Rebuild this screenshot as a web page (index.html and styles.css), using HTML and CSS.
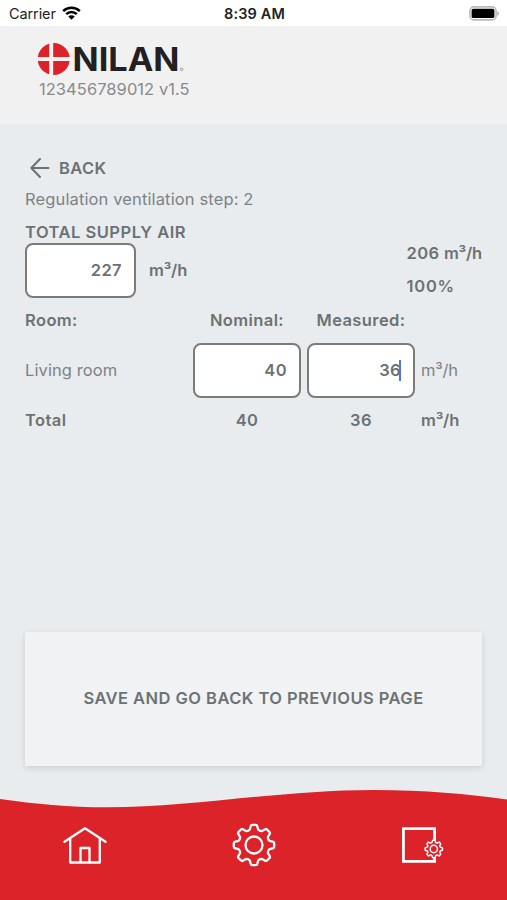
FILE: index.html
```
<!DOCTYPE html>
<html lang="en">
<head>
    <meta charset="UTF-8">
    <meta name="viewport" content="width=device-width, initial-scale=1.0">
    <title>Nilan - Total supply air</title>
    <link rel="stylesheet" href="styles.css">
</head>
<body>
    <div class="status-bar">
        <div class="carrier">
            <span>Carrier</span>
            <svg width="19" height="14" viewBox="0 0 19 14">
                <path d="M1.2 5.2a11.8 11.8 0 0 1 16.6 0M4.2 8.2a7.5 7.5 0 0 1 10.6 0" fill="none" stroke="#000" stroke-width="2.5"/>
                <path d="M9.5 13.8L6.3 10.5a4.6 4.6 0 0 1 6.4 0z"/>
            </svg>
        </div>
        <div class="time">8:39 AM</div>
        <svg class="battery" width="31" height="15" viewBox="0 0 31 15">
            <rect x=".9" y=".9" width="26.2" height="13" rx="4" fill="#fff" stroke="#bababa" stroke-width="1.6"/>
            <rect x="2.6" y="2.8" width="22.8" height="9.2" rx="1.6"/>
            <path d="M28.3 5.2a2.4 2.4 0 0 1 0 4.6z" fill="#aaa"/>
        </svg>
    </div>

    <header class="header">
        <svg class="logo" width="150" height="34" viewBox="0 0 150 34">
            <circle cx="15.7" cy="17" r="16" fill="#dc232a"/>
            <path d="M13.2 0v34M-1 17h34" stroke="#f1f1f1" stroke-width="4"/>
            <text class="logo-text" x="34.5" y="28.7" textLength="107" lengthAdjust="spacingAndGlyphs">NILAN</text>
            <circle cx="143.7" cy="27.3" r="1.3" fill="none" stroke="#888" stroke-width=".8"/>
        </svg>
        <div class="serial">123456789012 v1.5</div>
    </header>

    <main class="content">
        <a class="back">
            <svg width="20" height="20" viewBox="0 0 20 20">
                <path d="M18.5 10H1.3M10 1L1.3 10l8.7 9"/>
            </svg>
            <span>BACK</span>
        </a>
        <div class="step">Regulation ventilation step: 2</div>
        <div class="supply">
            <div>
                <div class="supply-title">TOTAL SUPPLY AIR</div>
                <div class="supply-input">
                    <div class="field">227</div>
                    <span class="m3">m³/h</span>
                </div>
            </div>
            <div class="supply-info">
                <div>206 <span class="m3">m³/h</span></div>
                <div class="percent">100%</div>
            </div>
        </div>

        <div class="rooms">
            <b>Room:</b>
            <b class="center">Nominal:</b>
            <b class="center">Measured:</b>
            <span></span>

            <span class="room-name">Living room</span>
            <div class="field">40</div>
            <div class="field">36<i class="caret"></i></div>
            <span class="unit m3">m³/h</span>

            <b>Total</b>
            <b class="center">40</b>
            <b class="center">36</b>
            <b class="unit m3">m³/h</b>
        </div>

        <div class="save">SAVE AND GO BACK TO PREVIOUS PAGE</div>
    </main>

    <footer class="footer">
        <svg class="wave" width="507" height="20" viewBox="0 0 507 20">
            <path d="M0 9C36 14 68 17.3 108 17.3C193 17.3 280 0 374 0C424 0 468 4 507 9.5V20H0z" fill="#dc232a"/>
        </svg>
        <nav class="nav">
            <svg width="44" height="44" viewBox="-22 -22 44 44">
                <path d="M-20.5 -3.2L0 -16.7L20.5 -3.2M-14.8 -6.5V17.5H14.8V-6.5M-4.5 17.5V3H4.5V17.5"/>
            </svg>
            <svg width="44" height="44" viewBox="-22 -22 44 44">
                <path id="gear" d="M-4.2 -15.5L-3.3 -18.8Q-3 -20.2 -1.7 -20.2H1.7Q3 -20.2 3.3 -18.8L4.2 -15.5Q5.7 -13.7 8 -13.9L10.8 -15.6Q12 -16.4 13 -15.5L15.5 -13Q16.4 -12 15.6 -10.8L13.9 -8Q13.7 -5.7 15.5 -4.2L18.8 -3.3Q20.2 -3 20.2 -1.7V1.7Q20.2 3 18.8 3.3L15.5 4.2Q13.7 5.7 13.9 8L15.6 10.8Q16.4 12 15.5 13L13 15.5Q12 16.4 10.8 15.6L8 13.9Q5.7 13.7 4.2 15.5L3.3 18.8Q3 20.2 1.7 20.2H-1.7Q-3 20.2 -3.3 18.8L-4.2 15.5Q-5.7 13.7 -8 13.9L-10.8 15.6Q-12 16.4 -13 15.5L-15.5 13Q-16.4 12 -15.6 10.8L-13.9 8Q-13.7 5.7 -15.5 4.2L-18.8 3.3Q-20.2 3 -20.2 1.7V-1.7Q-20.2 -3 -18.8 -3.3L-15.5 -4.2Q-13.7 -5.7 -13.9 -8L-15.6 -10.8Q-16.4 -12 -15.5 -13L-13 -15.5Q-12 -16.4 -10.8 -15.6L-8 -13.9Q-5.7 -13.7 -4.2 -15.5ZM8.5 0A8.5 8.5 0 1 1 -8.5 0A8.5 8.5 0 1 1 8.5 0Z"/>
            </svg>
            <svg width="44" height="44" viewBox="-22 -22 44 44">
                <path class="frame" d="M12.6 -5V-16.3H-18.6V16.4H12.6V13"/>
                <use href="#gear" class="small-gear" transform="translate(11.8 4) scale(.43)"/>
            </svg>
        </nav>
    </footer>
</body>
</html>
```
FILE: styles.css
```
* {
    margin: 0;
    padding: 0;
    box-sizing: border-box;
}

body {
    width: 507px;
    height: 900px;
    display: flex;
    flex-direction: column;
    background: #e8ecef;
    color: #6c7273;
    font-family: Inter, "Liberation Sans", sans-serif;
    font-size: 16.5px;
    line-height: 20px;
    letter-spacing: 0.4px;
    overflow: hidden;
}

b {
    font-weight: 600;
}

.status-bar {
    height: 26px;
    padding: 0 7px 0 9px;
    display: grid;
    grid-template-columns: 1fr auto 1fr;
    align-items: center;
    background: #fff;
    color: #222;
    font-size: 14.5px;
    letter-spacing: 0;
}

.carrier {
    display: flex;
    align-items: center;
    gap: 6px;
    letter-spacing: -0.1px;
}

.time {
    font-weight: 600;
    padding-top: 2px;
    letter-spacing: 0.15px;
}

.carrier span {
    padding-top: 2px;
}

.battery {
    justify-self: end;
}

.header {
    height: 98px;
    padding: 16px 38px 0;
    background: #f1f1f1;
}

.logo {
    display: block;
    overflow: visible;
}

.logo-text {
    font-size: 32.5px;
    font-weight: 700;
    letter-spacing: 0;
    fill: #222021;
}

.serial {
    margin: 3px 0 0 1px;
    color: #8a8a8a;
    letter-spacing: 0.05px;
}

.content {
    flex: 1;
    padding: 34px 25px 0;
}

.back {
    display: flex;
    align-items: center;
    gap: 9px;
    margin-left: 5px;
    font-weight: 600;
}

.back path {
    fill: none;
    stroke: #6c7273;
    stroke-width: 2;
    stroke-linecap: round;
    stroke-linejoin: round;
}

.step {
    margin-top: 11px;
    color: #7d8384;
    letter-spacing: 0.13px;
}

.supply {
    display: flex;
    justify-content: space-between;
    margin-top: 13px;
    font-weight: 600;
}

.supply-title {
    margin-bottom: 1px;
    letter-spacing: 0.5px;
}

.supply-input {
    display: flex;
    align-items: center;
    gap: 13px;
}

.supply-input .field {
    width: 111px;
}

.supply-input .m3 {
    padding-bottom: 2px;
}

.supply-info {
    padding-top: 21px;
}

.percent {
    margin-top: 13px;
    letter-spacing: 0.8px;
}

.m3 {
    letter-spacing: -0.2px;
}

.field {
    width: 108px;
    height: 55px;
    padding: 0 12px 2px 0;
    display: flex;
    align-items: center;
    justify-content: flex-end;
    position: relative;
    background: #fff;
    border: 2px solid #7b7b7b;
    border-radius: 8px;
    font-weight: 600;
}

.caret {
    position: absolute;
    right: 12px;
    top: 15px;
    width: 2px;
    height: 21px;
    background: #5472e8;
}

.rooms {
    display: grid;
    grid-template-columns: 162px 108px 108px auto;
    grid-template-rows: 45px 55px 45px;
    column-gap: 6px;
    align-items: center;
}

.rooms > b,
.rooms > span {
    padding-bottom: 2px;
}

.center {
    text-align: center;
}

.room-name,
.unit {
    color: #7d8384;
}

.room-name {
    letter-spacing: 0.1px;
}

b.unit {
    color: #6c7273;
}

.save {
    height: 134px;
    margin-top: 189px;
    padding-bottom: 2px;
    display: flex;
    align-items: center;
    justify-content: center;
    background: #f0f2f4;
    box-shadow: 0 2px 6px rgba(0, 0, 0, 0.12);
    font-weight: 600;
    letter-spacing: 0.45px;
}

.footer {
    height: 110px;
}

.wave {
    display: block;
}

.nav {
    height: 90px;
    padding: 13px 63px 0;
    display: flex;
    justify-content: space-between;
    background: #dc232a;
}

.nav svg {
    fill: none;
    stroke: #fff;
    stroke-width: 2.3;
    stroke-linejoin: round;
    stroke-linecap: round;
}

.nav .frame {
    stroke-width: 2.8;
    stroke-linejoin: miter;
    stroke-linecap: butt;
}

.nav .small-gear {
    stroke-width: 3.5;
}
```
